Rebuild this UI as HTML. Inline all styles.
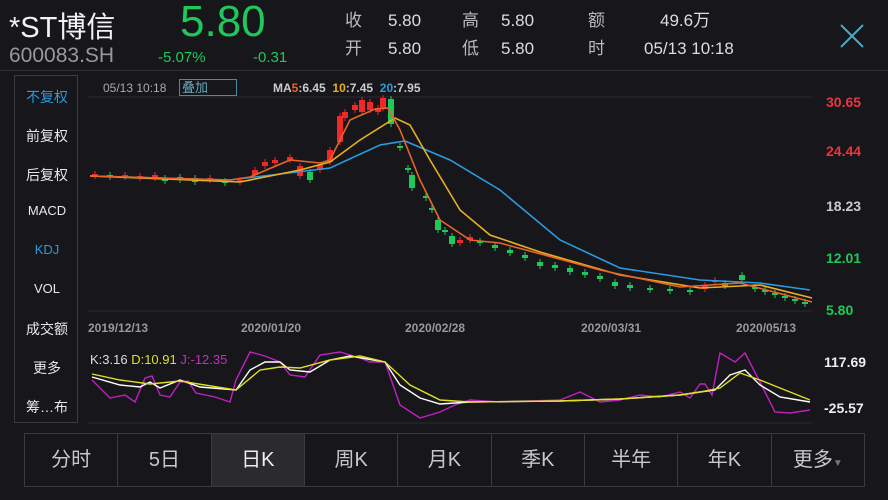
<!DOCTYPE html><html><head><meta charset="utf-8"><style>
body{margin:0;width:888px;height:500px;background:#16161b;font-family:"Liberation Sans","Noto Sans CJK SC",sans-serif;color:#ddd;overflow:hidden;position:relative}
.a{position:absolute;white-space:nowrap}
.side{position:absolute;left:14px;top:75px;width:64px;height:348px;border:1px solid #3a3a40;box-sizing:border-box}
.side div{position:absolute;width:64px;text-align:center;font-size:14px;color:#e8e8e8}
.tabs{position:absolute;left:24px;top:433px;width:841px;height:54px;border:1px solid #3a3a40;box-sizing:border-box;display:flex}
.tabs div{flex:1;border-right:1px solid #3a3a40;text-align:center;line-height:52px;font-size:20px;color:#c8c8c8}
.tabs div:last-child{border-right:none}
</style></head><body>
<div class="a" style="left:9px;top:4px;font-size:29px;color:#f2f2f2">*ST博信</div>
<div class="a" style="left:180px;top:-3px;font-size:44px;color:#1fc85a">5.80</div>
<div class="a" style="left:9px;top:44px;font-size:21px;color:#999">600083.SH</div>
<div class="a" style="left:158px;top:49px;font-size:15px;color:#1fc85a">-5.07%</div>
<div class="a" style="left:253px;top:49px;font-size:15px;color:#1fc85a">-0.31</div>
<div class="a" style="left:205px;top:7px;font-size:17px;color:#bbb;line-height:28px">
<span class="a" style="left:140px">收</span><span class="a" style="left:183px;color:#ddd">5.80</span><span class="a" style="left:257px">高</span><span class="a" style="left:296px;color:#ddd">5.80</span><span class="a" style="left:383px">额</span><span class="a" style="left:455px;color:#ddd">49.6万</span>
<span class="a" style="left:140px;top:28px">开</span><span class="a" style="left:183px;top:28px;color:#ddd">5.80</span><span class="a" style="left:257px;top:28px">低</span><span class="a" style="left:296px;top:28px;color:#ddd">5.80</span><span class="a" style="left:383px;top:28px">时</span><span class="a" style="left:439px;top:28px;color:#ddd">05/13 10:18</span></div>
<svg class="a" style="left:838px;top:22px" width="28" height="28"><path d="M3 3L25 25M25 3L3 25" stroke="#4aa8c8" stroke-width="2"/></svg>
<div class="a" style="left:0;top:70px;width:888px;height:1px;background:#2e2e34"></div>
<div class="side">
<div style="top:11px;color:#2a9be0">不复权</div><div style="top:50px">前复权</div><div style="top:89px">后复权</div><div style="top:127px;font-size:13px">MACD</div><div style="top:166px;color:#2a9be0;font-size:13px">KDJ</div><div style="top:205px;font-size:13px">VOL</div><div style="top:243px">成交额</div><div style="top:282px">更多</div><div style="top:321px">筹…布</div></div>
<div class="a" style="left:103px;top:81px;font-size:12px;color:#aaa">05/13 10:18</div>
<div class="a" style="left:179px;top:79px;width:54px;height:15px;border:1px solid #4a8aa0;font-size:13px;color:#6ab;line-height:15px;padding-left:2px">叠加</div>
<div class="a" style="left:273px;top:81px;font-size:12px;font-weight:bold;color:#ccc">MA<span style="color:#e8642a">5</span>:6.45 &nbsp;<span style="color:#e8b020">10</span>:7.45 &nbsp;<span style="color:#2a9be0">20</span>:7.95</div>
<div class="a" style="left:826px;top:94px;font-size:14px;font-weight:bold;color:#e8363e">30.65</div>
<div class="a" style="left:826px;top:143px;font-size:14px;font-weight:bold;color:#e8363e">24.44</div>
<div class="a" style="left:826px;top:198px;font-size:14px;font-weight:bold;color:#ccc">18.23</div>
<div class="a" style="left:826px;top:250px;font-size:14px;font-weight:bold;color:#1fc85a">12.01</div>
<div class="a" style="left:826px;top:302px;font-size:14px;font-weight:bold;color:#1fc85a">5.80</div>
<div class="a" style="top:321px;font-size:12px;font-weight:bold;color:#999;left:88px">2019/12/13</div>
<div class="a" style="top:321px;font-size:12px;font-weight:bold;color:#999;left:241px">2020/01/20</div>
<div class="a" style="top:321px;font-size:12px;font-weight:bold;color:#999;left:405px">2020/02/28</div>
<div class="a" style="top:321px;font-size:12px;font-weight:bold;color:#999;left:581px">2020/03/31</div>
<div class="a" style="top:321px;font-size:12px;font-weight:bold;color:#999;left:736px">2020/05/13</div>
<div class="a" style="left:90px;top:352px;font-size:13px;color:#ddd">K:3.16 <span style="color:#e0e020">D:10.91</span> <span style="color:#c030c0">J:-12.35</span></div>
<div class="a" style="left:824px;top:354px;font-size:14px;font-weight:bold;color:#eee">117.69</div>
<div class="a" style="left:824px;top:400px;font-size:14px;font-weight:bold;color:#eee">-25.57</div>
<svg class="a" style="left:0;top:0" width="888" height="430">
<line x1="88" y1="97" x2="812" y2="97" stroke="#2a2a30"/><line x1="88" y1="311" x2="812" y2="311" stroke="#2a2a30"/><line x1="88" y1="423" x2="812" y2="423" stroke="#2a2a30"/>
<g id="c"></g>
<polyline fill="none" stroke="#2a9be0" stroke-width="1.6" points="90,176 230,180 330,168 380,145 405,141 450,160 500,190 560,240 620,268 700,280 760,283 810,290"/>
<polyline fill="none" stroke="#e8b020" stroke-width="1.6" points="90,176 240,182 300,170 330,162 360,140 395,118 410,125 430,160 460,210 490,235 540,252 620,275 700,288 760,285 812,298"/>
<polyline fill="none" stroke="#e8642a" stroke-width="1.6" points="90,176 230,180 250,177 290,160 320,163 330,160 350,120 375,109 388,108 400,130 420,180 440,220 470,240 500,243 600,270 680,287 740,283 812,302"/>
<polyline fill="none" stroke="#c020c0" stroke-width="1.4" points="92,380 110,398 125,395 135,402 145,378 152,376 160,395 170,397 180,382 188,381 196,393 215,397 230,402 236,380 250,352 265,356 280,362 290,375 305,377 320,355 340,352 360,358 370,362 385,362 400,405 420,418 440,412 455,405 470,400 500,402 560,400 580,392 600,402 620,400 640,395 660,397 680,392 690,398 700,384 705,384 712,395 720,353 735,362 745,353 760,382 775,412 790,413 810,410"/>
<polyline fill="none" stroke="#fff" stroke-width="1.4" points="92,377 120,385 140,387 150,382 160,388 180,380 200,387 236,390 250,370 265,362 280,362 290,370 310,372 330,360 350,356 385,362 400,385 420,398 440,404 470,402 560,401 620,399 680,395 700,392 715,390 730,375 745,370 760,385 780,397 810,402"/>
<polyline fill="none" stroke="#e0e020" stroke-width="1.4" points="92,374 120,380 150,384 180,381 236,390 260,370 280,367 300,368 330,360 360,356 385,362 410,385 440,400 470,402 560,401 620,399 680,395 700,392 720,388 740,373 760,380 790,392 810,400"/>
</svg>
<div class="tabs"><div>分时</div><div>5日</div><div style="background:#2a2a2f;color:#eee">日K</div><div>周K</div><div>月K</div><div>季K</div><div>半年</div><div>年K</div><div>更多<span style="font-size:10px;color:#777">▼</span></div></div>
<script>
var d=[[95,176,174],[110,175,176],[125,176,175],[140,177,176],[155,178,175],[165,178,181],[180,177,180],[195,178,182],[210,180,178],[225,181,183],[240,182,180],[255,175,170],[265,166,162],[275,163,160],[290,160,157],[300,176,166],[310,172,180],[320,170,165],[330,162,150],[340,142,116],[345,118,112],[355,110,105],[362,112,100],[370,110,102],[378,112,108],[383,108,98],[391,99,124],[400,146,146],[408,168,168],[412,175,188],[426,196,196],[432,208,208],[438,220,230],[445,230,232],[452,236,244],[460,243,240],[470,240,237],[480,241,243],[495,245,248],[510,250,253],[525,255,258],[540,262,266],[555,265,268],[570,268,272],[585,272,275],[600,276,279],[615,282,286],[630,285,288],[650,288,290],[670,289,291],[690,290,292],[705,289,285],[715,282,280],[725,283,286],[742,275,280],[755,287,289],[765,290,292],[775,293,295],[785,296,297],[795,299,300],[805,302,304]];
var g=document.getElementById('c'),h='';
d.forEach(function(a){var up=a[2]<a[1];var t=Math.min(a[1],a[2]),b=Math.max(a[1],a[2]);if(b-t<2)b=t+2;var c=up?'#f02828':'#1fc85a';
h+='<line x1="'+a[0]+'" x2="'+a[0]+'" y1="'+(t-3)+'" y2="'+(b+3)+'" stroke="'+c+'"/><rect x="'+(a[0]-3)+'" y="'+t+'" width="6" height="'+(b-t)+'" fill="'+c+'"/>';});
g.innerHTML=h;
</script>
</body></html>
